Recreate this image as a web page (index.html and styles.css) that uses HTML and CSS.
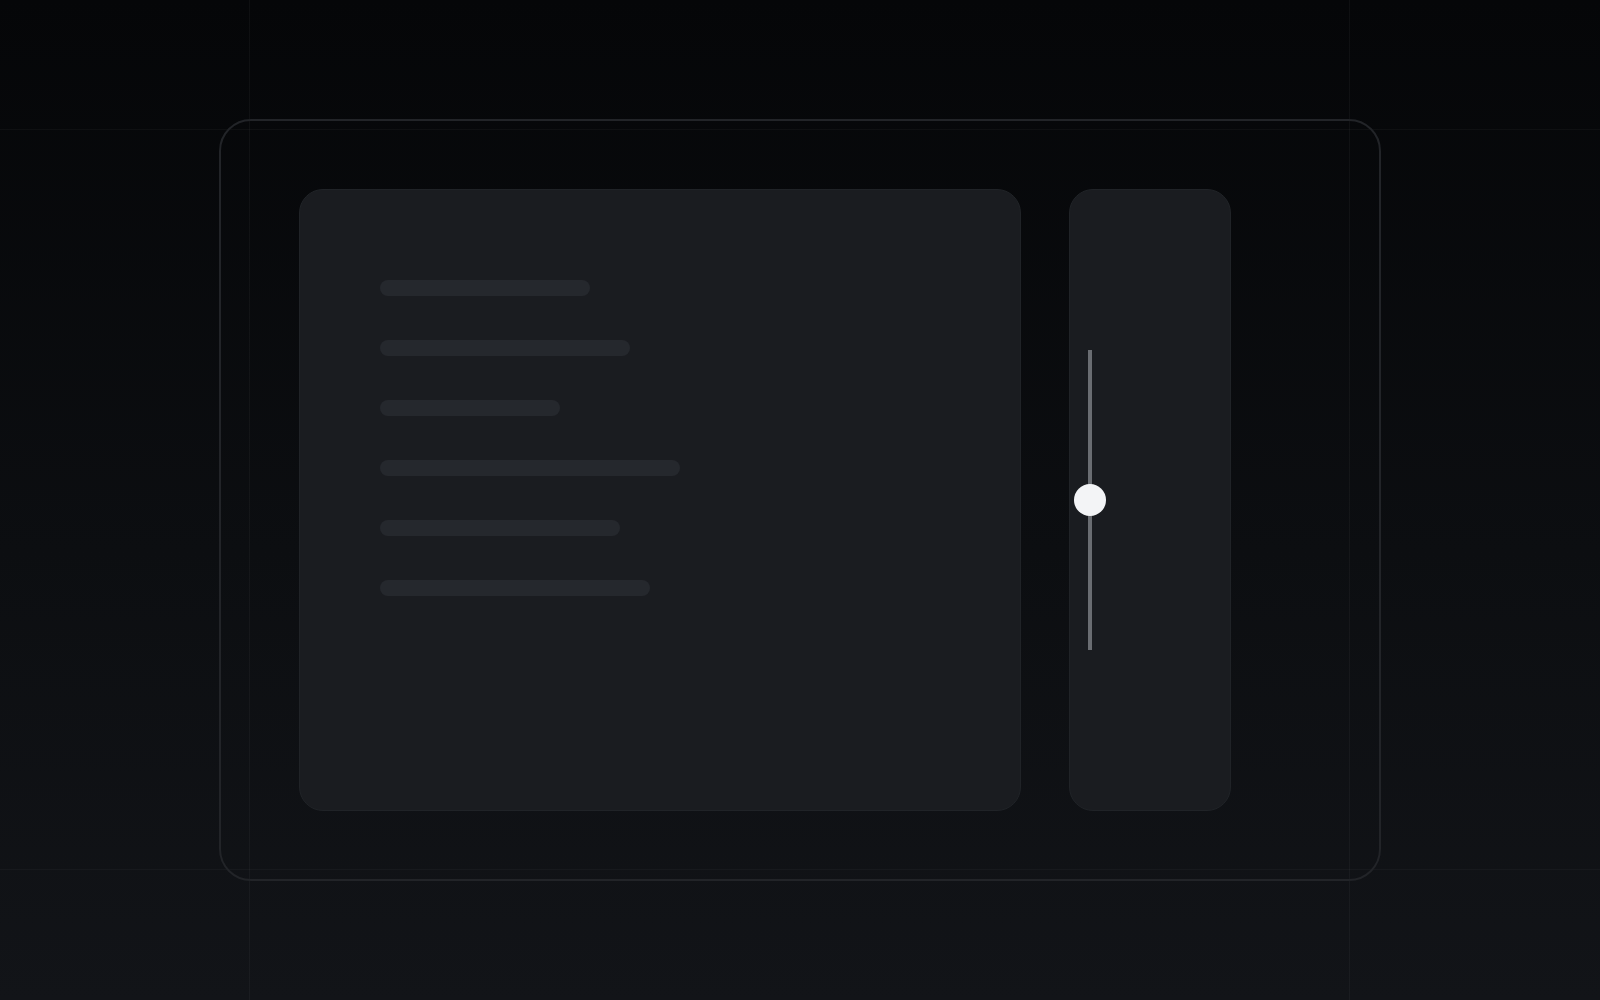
FILE: index.html
```html
<!DOCTYPE html>
<html lang="en">
<head>
<meta charset="utf-8">
<title>Panel</title>
<link rel="stylesheet" href="styles.css">
</head>
<body>
  <div class="stage">
    <div class="frame">
      <section class="panel">
        <div class="line" style="width:210px"></div>
        <div class="line" style="width:250px"></div>
        <div class="line" style="width:180px"></div>
        <div class="line" style="width:300px"></div>
        <div class="line" style="width:240px"></div>
        <div class="line" style="width:270px"></div>
      </section>
      <aside class="side">
        <div class="slider">
          <div class="track"></div>
          <div class="thumb"></div>
        </div>
      </aside>
    </div>
  </div>
</body>
</html>
```

FILE: styles.css
```css
* {
  box-sizing: border-box;
}

html,
body {
  margin: 0;
  height: 100%;
}

body {
  width: 1600px;
  height: 1000px;
  overflow: hidden;
  font-family: "Inter", "Liberation Sans", sans-serif;
  background:
    linear-gradient(to right, transparent 249px, rgba(255, 255, 255, 0.035) 249px, rgba(255, 255, 255, 0.035) 250px, transparent 250px,
      transparent 1349px, rgba(255, 255, 255, 0.035) 1349px, rgba(255, 255, 255, 0.035) 1350px, transparent 1350px),
    linear-gradient(to bottom, transparent 129px, rgba(255, 255, 255, 0.03) 129px, rgba(255, 255, 255, 0.03) 130px, transparent 130px,
      transparent 869px, rgba(255, 255, 255, 0.03) 869px, rgba(255, 255, 255, 0.03) 870px, transparent 870px),
    linear-gradient(to bottom, #050608 0%, #0c0e11 55%, #121418 100%);
}

.stage {
  padding: 119px 0 0 219px;
}

.frame {
  width: 1162px;
  height: 762px;
  border: 2px solid #222428;
  border-radius: 32px;
  padding: 68px 0 0 78px;
  display: flex;
  gap: 48px;
}

.panel,
.side {
  height: 622px;
  background: #1a1c20;
  border: 1px solid #202327;
  border-radius: 24px;
}

.panel {
  width: 722px;
  padding: 90px 0 0 80px;
  display: flex;
  flex-direction: column;
  gap: 44px;
}

.line {
  height: 16px;
  border-radius: 8px;
  background: #25282d;
}

.side {
  width: 162px;
  padding: 160px 0 0 18px;
}

.slider {
  position: relative;
  width: 4px;
  height: 300px;
}

.track {
  width: 4px;
  height: 100%;
  background: #6a6d72;
}

.thumb {
  position: absolute;
  left: -14px;
  top: 134px;
  width: 32px;
  height: 32px;
  border-radius: 50%;
  background: #f3f4f6;
}
```
